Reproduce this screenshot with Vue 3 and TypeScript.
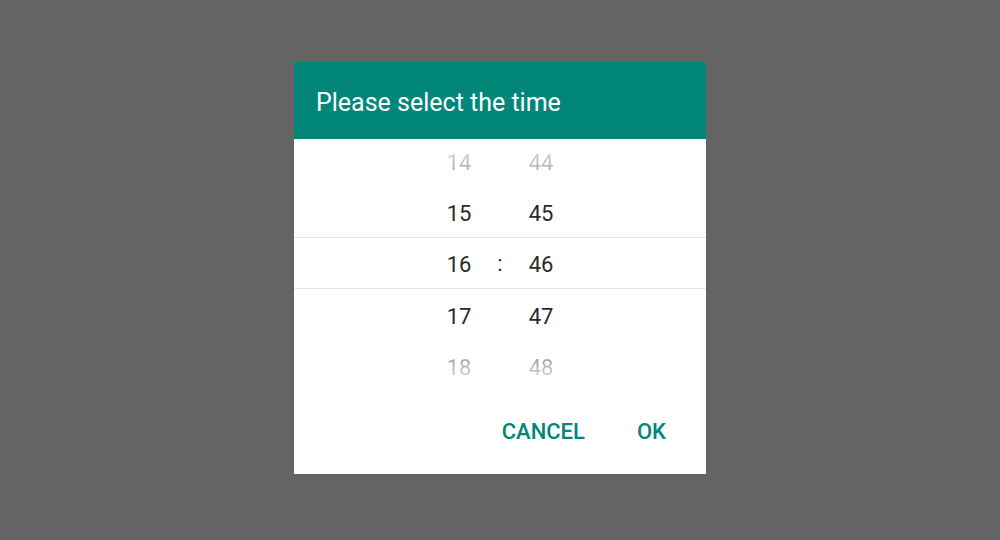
<script setup lang="ts">
import { computed, ref } from 'vue'

const hour = ref(16)
const minute = ref(46)
const open = ref(true)

const offsets = [-2, -1, 0, 1, 2]

function around(value: number, size: number): number[] {
  return offsets.map((offset) => (value + offset + size) % size)
}

const hours = computed(() => around(hour.value, 24))
const minutes = computed(() => around(minute.value, 60))

function pad(value: number): string {
  return String(value).padStart(2, '0')
}
</script>

<template>
  <main class="backdrop">
    <section v-if="open" class="dialog" role="dialog" aria-labelledby="dialog-title">
      <header class="header">
        <h1 id="dialog-title" class="title">Please select the time</h1>
      </header>
      <div class="picker">
        <div class="wheel" role="group" aria-label="Hour">
          <button
            v-for="value in hours"
            :key="value"
            type="button"
            class="option"
            :aria-pressed="value === hour"
            @click="hour = value"
          >{{ pad(value) }}</button>
        </div>
        <span class="separator">:</span>
        <div class="wheel" role="group" aria-label="Minute">
          <button
            v-for="value in minutes"
            :key="value"
            type="button"
            class="option"
            :aria-pressed="value === minute"
            @click="minute = value"
          >{{ pad(value) }}</button>
        </div>
        <div class="band"></div>
      </div>
      <footer class="actions">
        <button type="button" class="action" @click="open = false">CANCEL</button>
        <button type="button" class="action" @click="open = false">OK</button>
      </footer>
    </section>
  </main>
</template>

<style>
body {
  background: #646464;
}
</style>

<style scoped>
.backdrop {
  box-sizing: border-box;
  min-height: 100vh;
  display: flex;
  flex-direction: column;
  align-items: center;
  padding: 62px 16px 16px;
  background: #646464;
  font-family: Roboto, "Liberation Sans", sans-serif;
}

.dialog {
  width: 100%;
  max-width: 412px;
  background: #fff;
}

.header {
  padding: 25px 22px 20px;
  background: #028678;
}

.title {
  margin: 0;
  font-size: 25px;
  line-height: 32px;
  font-weight: 400;
  color: #fff;
}

.picker {
  position: relative;
  display: flex;
  justify-content: center;
  align-items: center;
  height: 252px;
  overflow: hidden;
}

.wheel {
  display: grid;
  grid-template-rows: repeat(5, 1fr);
  flex: none;
  width: 52px;
  height: 257px;
}

.option {
  margin: 0;
  padding: 0;
  border: 0;
  background: none;
  font: inherit;
  font-size: 22px;
  color: #2a2a2a;
  cursor: pointer;
}

.option:first-child,
.option:last-child {
  color: transparent;
  background-clip: text;
  -webkit-background-clip: text;
}

.option:first-child {
  background-image: linear-gradient(#d4d4d4 30%, #adadad 70%);
}

.option:last-child {
  background-image: linear-gradient(#a6a6a6 35%, #e0e0e0 75%);
}

.separator {
  width: 30px;
  padding-bottom: 2px;
  text-align: center;
  font-size: 22px;
  line-height: 28px;
  color: #2a2a2a;
}

.band {
  position: absolute;
  inset: 98px 0 auto;
  height: 50px;
  border: solid #e4e4e4;
  border-width: 1px 0;
  pointer-events: none;
}

.actions {
  display: flex;
  justify-content: flex-end;
  gap: 20px;
  padding: 20px 24px 22px;
}

.action {
  margin: 0;
  padding: 0 16px;
  border: 0;
  background: none;
  font: inherit;
  font-size: 22px;
  line-height: 41px;
  font-weight: 500;
  color: #028678;
  cursor: pointer;
}
</style>
